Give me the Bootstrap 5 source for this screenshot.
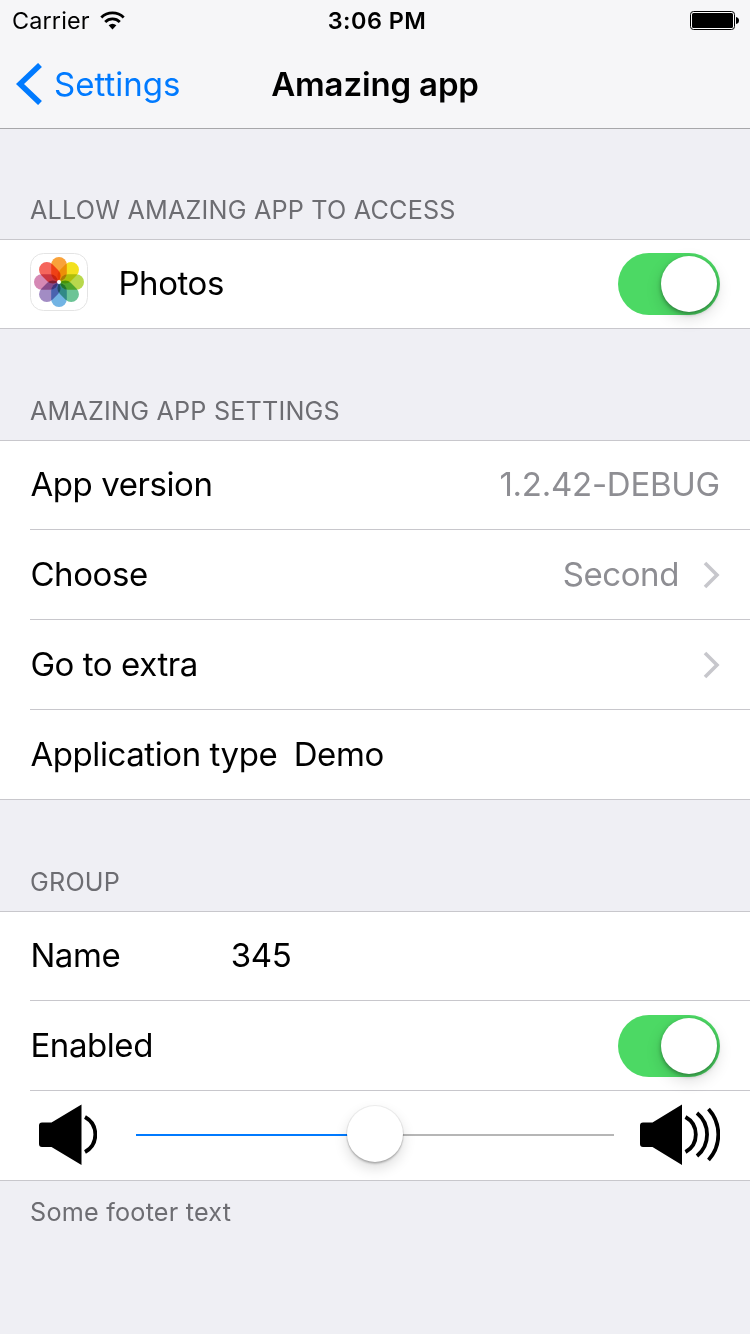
<!DOCTYPE html>
<html lang="en">
<head>
<meta charset="utf-8">
<meta name="viewport" content="width=device-width, initial-scale=1">
<title>Amazing app</title>
<link href="https://cdn.jsdelivr.net/npm/bootstrap@5.3.0/dist/css/bootstrap.min.css" rel="stylesheet">
<style>
  body { font-family: Inter, "Liberation Sans", sans-serif; background: #efeff4; color: #000; font-size: 33px; line-height: 40px; letter-spacing: -.42px; width: 750px; height: 1334px; overflow: hidden; }
  svg { display: block; flex: none; }
  .topbar { height: 129px; background: #f6f6f8; border-bottom: 1px solid #a7a7aa; }
  .statusbar { height: 41px; font-size: 23.4px; padding: 0 11px 0 12px; letter-spacing: .15px; }
  .clock { letter-spacing: .45px; margin-left: 3px; }
  .wifi { margin-left: 10px; }
  .navrow { height: 85px; padding: 0 16px; letter-spacing: 0; }
  .side { flex: 1 1 0; }
  .back { color: #007aff; text-decoration: none; gap: 11px; }
  .screen-title { font-weight: 600; letter-spacing: -.15px; }
  .section-label { height: 111px; padding: 0 30px 9px; font-size: 25.2px; letter-spacing: .19px; color: #6d6d72; }
  .section-label.first { height: 110px; }
  .rows { background: #fff; border-top: 1px solid #c8c7cc; border-radius: 0; }
  .rows > .list-group-item { height: 90px; margin-left: 30px; padding: 0 30px 0 0; border: 0; border-bottom: 1px solid #c8c7cc; color: #000; border-radius: 0; background: none; }
  .rows > .list-group-item:first-child { height: 89px; }
  .rows > .list-group-item:last-child { margin-left: 0; padding-left: 30px; border-bottom-width: 1px; }
  .rows > .list-group-item > span { padding-bottom: 1px; margin-left: .4px; }
  .rows > .list-group-item:first-child > span { padding-bottom: 2px; }
  .value { color: #8e8e93; }
  .value.version { letter-spacing: -.25px; }
  .value.choice { margin-right: 24px; }
  .app-icon { margin: 0 30px 4px 0; }
  .petals use { mix-blend-mode: multiply; }
  .petals { isolation: isolate; }
  .type-label { margin-right: 16px; }
  .field-label { width: 200px; }
  .toggle { width: 102px; height: 62px; border-radius: 31px; background: #4cd964; padding: 3px; }
  .knob { width: 56px; height: 56px; border-radius: 50%; background: #fff; box-shadow: 0 6px 16px rgba(0,0,0,.15), 0 2px 4px rgba(0,0,0,.35); }
  .track { height: 2px; width: 478px; background: #b6b6b6; margin-left: 39px; }
  .track-fill { height: 2px; background: #007aff; }
  .thumb { position: absolute; left: 211px; top: -28px; box-shadow: 0 6px 14px rgba(0,0,0,.14), 0 2px 2px rgba(0,0,0,.2), 0 0 0 1px rgba(0,0,0,.06); }
  .volume { padding-bottom: 1px !important; }
  .footnote { font-size: 25.2px; letter-spacing: .22px; color: #6d6d72; padding: 11px 30px; }
</style>
</head>
<body>
<header class="topbar">
  <div class="statusbar d-flex align-items-center">
    <div class="side d-flex align-items-center">
      <span>Carrier</span>
      <svg class="wifi" width="25" height="19" viewBox="0 0 25 19"><g fill="none" stroke="#000" stroke-width="2.800"><path d="M1.300 6.400A16 16 0 0 1 23.700 6.400"/><path d="M5.200 10.900A10.400 10.400 0 0 1 19.800 10.900"/></g><path d="M12.500 18.500L8.600 14.300A6 6 0 0 1 16.400 14.300Z"/></svg>
    </div>
    <span class="clock fw-semibold">3:06 PM</span>
    <div class="side d-flex justify-content-end">
      <svg width="49" height="19" viewBox="0 0 49 19"><rect x=".5" y=".5" width="44" height="18" rx="3" fill="#fff" stroke="#000"/><rect x="2" y="2" width="41" height="15" rx="1.500"/><path d="M46 6Q49 6.500 49 9.500T46 13Z"/></svg>
    </div>
  </div>
  <nav class="navrow d-flex align-items-center">
    <div class="side d-flex">
      <a class="back d-inline-flex align-items-center" href="#">
        <svg width="27" height="42" viewBox="0 0 27 42"><path d="M24 2L4 21L24 40" fill="none" stroke="#007aff" stroke-width="5.600"/></svg>
        <span>Settings</span>
      </a>
    </div>
    <span class="screen-title">Amazing app</span>
    <div class="side"></div>
  </nav>
</header>
<main>
  <div class="section-label first d-flex align-items-end">ALLOW AMAZING APP TO ACCESS</div>
  <ul class="rows list-group list-group-flush">
    <li class="list-group-item d-flex align-items-center">
      <svg class="app-icon" width="58" height="58" viewBox="-29 -29 58 58">
        <rect x="-28.500" y="-28.500" width="57" height="57" rx="13" fill="#fff" stroke="#e4e4e4"/>
        <defs><rect id="petal" x="-7.800" y="-25" width="15.600" height="24" rx="7.800"/></defs>
        <g class="petals">
          <use href="#petal" fill="#f9a23a"/>
          <use href="#petal" fill="#f3e11f" transform="rotate(45)"/>
          <use href="#petal" fill="#b8d84c" transform="rotate(90)"/>
          <use href="#petal" fill="#6cc496" transform="rotate(135)"/>
          <use href="#petal" fill="#72b4e4" transform="rotate(180)"/>
          <use href="#petal" fill="#a28cc4" transform="rotate(225)"/>
          <use href="#petal" fill="#d588b4" transform="rotate(270)"/>
          <use href="#petal" fill="#f5655c" transform="rotate(315)"/>
        </g>
        <circle r="2" fill="#fff"/>
      </svg>
      <span>Photos</span>
      <div class="toggle d-flex justify-content-end ms-auto"><div class="knob"></div></div>
    </li>
  </ul>
  <div class="section-label d-flex align-items-end">AMAZING APP SETTINGS</div>
  <ul class="rows list-group list-group-flush">
    <li class="list-group-item d-flex align-items-center justify-content-between"><span>App version</span><span class="value version">1.2.42-DEBUG</span></li>
    <li class="list-group-item d-flex align-items-center"><span class="me-auto">Choose</span><span class="value choice">Second</span>
      <svg width="17" height="28" viewBox="0 0 17 28"><path d="M2 2L14 14L2 26" fill="none" stroke="#c7c7cc" stroke-width="3.600"/></svg></li>
    <li class="list-group-item d-flex align-items-center justify-content-between"><span>Go to extra</span>
      <svg width="17" height="28" viewBox="0 0 17 28"><path d="M2 2L14 14L2 26" fill="none" stroke="#c7c7cc" stroke-width="3.600"/></svg></li>
    <li class="list-group-item d-flex align-items-center"><span class="type-label">Application type</span><span>Demo</span></li>
  </ul>
  <div class="section-label d-flex align-items-end">GROUP</div>
  <ul class="rows list-group list-group-flush">
    <li class="list-group-item d-flex align-items-center"><span class="field-label">Name</span><span>345</span></li>
    <li class="list-group-item d-flex align-items-center justify-content-between"><span>Enabled</span><div class="toggle d-flex justify-content-end"><div class="knob"></div></div></li>
    <li class="volume list-group-item d-flex align-items-center">
      <svg width="67" height="62" viewBox="0 0 67 62"><path d="M12 18.500H21.500L51.500 .5V61L21.500 43H12Q9 43 9 40V21.500Q9 18.500 12 18.500Z"/><path d="M55 13A20 20 0 0 1 55 48" fill="none" stroke="#000" stroke-width="3.800"/></svg>
      <div class="track position-relative"><div class="track-fill" style="width:50%"></div><div class="knob thumb"></div></div>
      <svg class="ms-auto" width="81" height="62" viewBox="0 0 81 62"><path d="M4 18.500H13.500L43 .5V61L13.500 43H4Q1 43 1 40V21.500Q1 18.500 4 18.500Z"/><g fill="none" stroke="#000" stroke-width="3.800"><path d="M46.500 13A20 20 0 0 1 46.500 48"/><path d="M58 9A28 28 0 0 1 58 52"/><path d="M69.500 5A38 38 0 0 1 69.500 56"/></g></svg>
    </li>
  </ul>
  <p class="footnote mb-0">Some footer text</p>
</main>
<script src="https://cdn.jsdelivr.net/npm/bootstrap@5.3.0/dist/js/bootstrap.bundle.min.js"></script>
</body>
</html>
